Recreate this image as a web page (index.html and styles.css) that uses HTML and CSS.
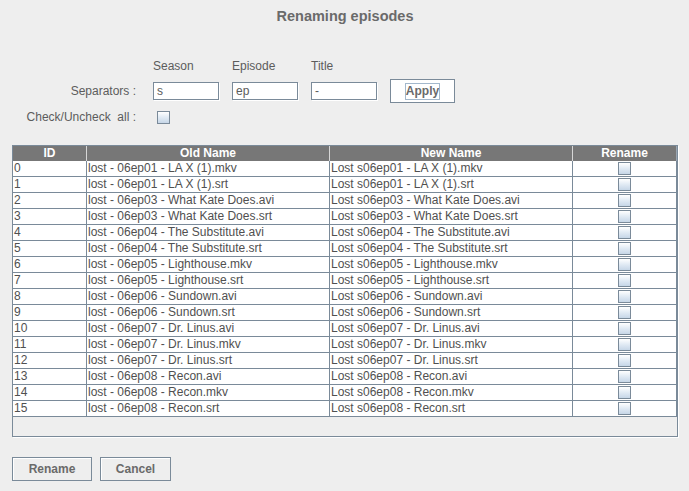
FILE: index.html
```html
<!DOCTYPE html>
<html>
<head>
<meta charset="utf-8">
<link rel="stylesheet" href="styles.css">
</head>
<body>
<div class="title">Renaming episodes</div>
<div class="form">
  <div class="row row-heads">
    <div class="label"></div>
    <div class="field-head">Season</div>
    <div class="field-head">Episode</div>
    <div class="field-head">Title</div>
  </div>
  <div class="row row-fields">
    <div class="label">Separators :</div>
    <div class="input">s</div>
    <div class="input">ep</div>
    <div class="input">-</div>
    <div class="btn btn-apply"><span class="focus">Apply</span></div>
  </div>
  <div class="row row-check">
    <div class="label">Check/Uncheck &nbsp;all :</div>
    <div class="check-wrap"><div class="cb"></div></div>
  </div>
</div>
<div class="pane">
  <div class="grid">
    <div class="th">ID</div><div class="th">Old Name</div><div class="th">New Name</div><div class="th last">Rename</div>
    <div class="td">0</div><div class="td">lost - 06ep01 - LA X (1).mkv</div><div class="td">Lost s06ep01 - LA X (1).mkv</div><div class="td cbc"><div class="cb"></div></div>
    <div class="td">1</div><div class="td">lost - 06ep01 - LA X (1).srt</div><div class="td">Lost s06ep01 - LA X (1).srt</div><div class="td cbc"><div class="cb"></div></div>
    <div class="td">2</div><div class="td">lost - 06ep03 - What Kate Does.avi</div><div class="td">Lost s06ep03 - What Kate Does.avi</div><div class="td cbc"><div class="cb"></div></div>
    <div class="td">3</div><div class="td">lost - 06ep03 - What Kate Does.srt</div><div class="td">Lost s06ep03 - What Kate Does.srt</div><div class="td cbc"><div class="cb"></div></div>
    <div class="td">4</div><div class="td">lost - 06ep04 - The Substitute.avi</div><div class="td">Lost s06ep04 - The Substitute.avi</div><div class="td cbc"><div class="cb"></div></div>
    <div class="td">5</div><div class="td">lost - 06ep04 - The Substitute.srt</div><div class="td">Lost s06ep04 - The Substitute.srt</div><div class="td cbc"><div class="cb"></div></div>
    <div class="td">6</div><div class="td">lost - 06ep05 - Lighthouse.mkv</div><div class="td">Lost s06ep05 - Lighthouse.mkv</div><div class="td cbc"><div class="cb"></div></div>
    <div class="td">7</div><div class="td">lost - 06ep05 - Lighthouse.srt</div><div class="td">Lost s06ep05 - Lighthouse.srt</div><div class="td cbc"><div class="cb"></div></div>
    <div class="td">8</div><div class="td">lost - 06ep06 - Sundown.avi</div><div class="td">Lost s06ep06 - Sundown.avi</div><div class="td cbc"><div class="cb"></div></div>
    <div class="td">9</div><div class="td">lost - 06ep06 - Sundown.srt</div><div class="td">Lost s06ep06 - Sundown.srt</div><div class="td cbc"><div class="cb"></div></div>
    <div class="td">10</div><div class="td">lost - 06ep07 - Dr. Linus.avi</div><div class="td">Lost s06ep07 - Dr. Linus.avi</div><div class="td cbc"><div class="cb"></div></div>
    <div class="td">11</div><div class="td">lost - 06ep07 - Dr. Linus.mkv</div><div class="td">Lost s06ep07 - Dr. Linus.mkv</div><div class="td cbc"><div class="cb"></div></div>
    <div class="td">12</div><div class="td">lost - 06ep07 - Dr. Linus.srt</div><div class="td">Lost s06ep07 - Dr. Linus.srt</div><div class="td cbc"><div class="cb"></div></div>
    <div class="td">13</div><div class="td">lost - 06ep08 - Recon.avi</div><div class="td">Lost s06ep08 - Recon.avi</div><div class="td cbc"><div class="cb"></div></div>
    <div class="td">14</div><div class="td">lost - 06ep08 - Recon.mkv</div><div class="td">Lost s06ep08 - Recon.mkv</div><div class="td cbc"><div class="cb"></div></div>
    <div class="td">15</div><div class="td">lost - 06ep08 - Recon.srt</div><div class="td">Lost s06ep08 - Recon.srt</div><div class="td cbc"><div class="cb"></div></div>
  </div>
</div>
<div class="actions">
  <div class="btn btn-rename">Rename</div>
  <div class="btn btn-cancel">Cancel</div>
</div>
</body>
</html>
```

FILE: styles.css
```css
html, body {
  margin: 0;
  padding: 0;
  background: #eeeeee;
  font-family: "Liberation Sans", Arial, sans-serif;
  font-size: 12px;
  color: #333333;
}

.title {
  padding-top: 8px;
  height: 17px;
  line-height: 17px;
  text-align: center;
  font-weight: bold;
  font-size: 14.5px;
  color: #6a6a6a;
  padding-left: 1px;
}

.form {
  margin-top: 34px;
}

.row {
  display: flex;
  align-items: center;
  column-gap: 13px;
}

.label {
  width: 136px;
  padding-right: 4px;
  text-align: right;
  color: #5c5c5c;
  white-space: nowrap;
}

.row-heads {
  height: 14px;
  line-height: 14px;
}

.field-head {
  width: 66px;
  color: #5c5c5c;
}

.row-fields {
  margin-top: 6px;
  height: 24px;
}

.input {
  box-sizing: border-box;
  width: 66px;
  height: 18px;
  line-height: 16px;
  padding-left: 3px;
  background: #ffffff;
  border: 1px solid #7a8a99;
  box-shadow: 1px 1px 0 #ffffff;
  color: #5c5c5c;
}

.btn {
  box-sizing: border-box;
  height: 24px;
  display: flex;
  align-items: center;
  justify-content: center;
  border: 1px solid #7a8a99;
  font-weight: bold;
  color: #6a6a6a;
}

.btn-apply {
  width: 65px;
  background: #ffffff;
}

.focus {
  border: 1px solid #a3b8cc;
  padding: 0 0 1px 0;
  line-height: 14px;
}

.row-check {
  margin-top: 4px;
  height: 20px;
}

.check-wrap {
  padding-left: 4px;
  display: flex;
}

.cb {
  box-sizing: border-box;
  width: 13px;
  height: 13px;
  border: 1px solid #7a8a99;
  background: linear-gradient(180deg, #ffffff 0%, #e3ecf5 45%, #c6d6e7 100%);
}

.pane {
  box-sizing: border-box;
  margin-top: 18px;
  margin-left: 12px;
  width: 666px;
  height: 292px;
  border: 1px solid #7a8a99;
  box-shadow: 1px 1px 0 #ffffff;
  background: #eeeeee;
}

.grid {
  display: grid;
  grid-template-columns: 74px 243px 243px 104px;
}

.th {
  box-sizing: border-box;
  height: 15px;
  line-height: 15px;
  background: #777777;
  color: #ffffff;
  font-weight: bold;
  text-align: center;
  border-right: 1px solid #d6d6d6;
}

.th.last {
  border-right: 1px solid #9aa6b2;
}

.td {
  box-sizing: border-box;
  height: 16px;
  line-height: 15px;
  background: #ffffff;
  border-right: 1px solid #7a8a99;
  border-bottom: 1px solid #7a8a99;
  padding-left: 1px;
  white-space: nowrap;
  overflow: hidden;
  color: #505050;
}

.cbc {
  display: flex;
  justify-content: center;
  padding-left: 0;
  padding-top: 1px;
}

.actions {
  display: flex;
  column-gap: 8px;
  margin-top: 20px;
  margin-left: 12px;
}

.btn-rename {
  width: 80px;
  background: #eeeeee;
  box-shadow: inset 1px 1px 0 #ffffff;
}

.btn-cancel {
  width: 71px;
  background: #eeeeee;
  box-shadow: inset 1px 1px 0 #ffffff;
}
```
